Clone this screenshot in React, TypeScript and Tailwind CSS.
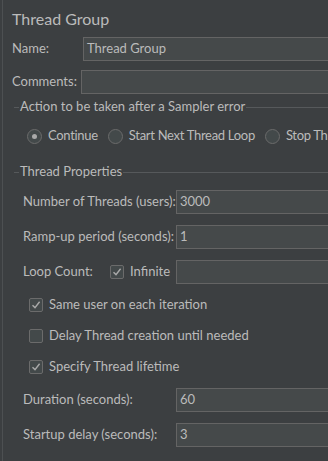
const font = { fontFamily: 'Lato, "Noto Sans", sans-serif' };

function TextField({ value, className }: { value?: string; className: string }) {
  return (
    <div className={`h-[24px] border border-[#646464] bg-[#45494a] flex items-center pl-[3px] text-[13px] text-[#bbbbbb] ${className}`}>
      {value}
    </div>
  );
}

function SectionTitle({ title }: { title: string }) {
  return (
    <div className="h-[26px] flex items-center">
      <div className="w-[5px] h-px bg-[#56595b] ml-[11px] shrink-0" />
      <span className="px-[1px] text-[13px] text-[#bbbbbb] whitespace-nowrap">{title}</span>
      <div className="flex-1 h-px bg-[#56595b]" />
    </div>
  );
}

function Radio({ label, checked }: { label: string; checked?: boolean }) {
  return (
    <div className="flex items-center gap-[6px] shrink-0">
      <div className="w-[15px] h-[15px] rounded-full border border-[#6b6b6b] bg-[#43494a] flex items-center justify-center shrink-0">
        {checked && <div className="w-[5px] h-[5px] rounded-full bg-[#a9a9a9]" />}
      </div>
      <span className="text-[13px] tracking-[-0.3px] text-[#bbbbbb] whitespace-nowrap">{label}</span>
    </div>
  );
}

function Check({ checked }: { checked?: boolean }) {
  return (
    <div className="w-[14px] h-[14px] rounded-[2px] border border-[#6b6b6b] bg-[#43494a] flex items-center justify-center shrink-0">
      {checked && (
        <svg width="10" height="10" viewBox="0 0 10 10">
          <path d="M1.5 5.2 L4 7.6 L8.6 1.8" fill="none" stroke="#a9a9a9" strokeWidth="1.4" />
        </svg>
      )}
    </div>
  );
}

function CheckRow({ label, checked, className }: { label: string; checked?: boolean; className: string }) {
  return (
    <div className={`h-[24px] flex items-center gap-[6px] pl-[26px] ${className}`}>
      <Check checked={checked} />
      <span className="text-[13px] text-[#bbbbbb] whitespace-nowrap">{label}</span>
    </div>
  );
}

function FieldRow({ label, value, className }: { label: string; value: string; className: string }) {
  return (
    <div className={`h-[24px] flex items-center ${className}`}>
      <span className="w-[173px] shrink-0 pl-[20px] text-[13px] text-[#bbbbbb] whitespace-nowrap">{label}</span>
      <TextField value={value} className="flex-1 -mr-[4px]" />
    </div>
  );
}

export default function App() {
  return (
    <div className="w-[328px] h-[461px] bg-[#3c3f41] overflow-hidden flex" style={font}>
      <div className="w-[2px] shrink-0" />
      <div className="w-px shrink-0 bg-[#4d5052]" />
      <div className="flex-1 flex flex-col pt-[6px] overflow-hidden">
        <div className="h-[26px] pl-[9px] text-[16px] leading-[26px] text-[#bbbbbb]">Thread Group</div>

        <div className="h-[24px] mt-[5px] flex items-center">
          <span className="w-[80px] shrink-0 pl-[9px] text-[13px] text-[#bbbbbb]">Name:</span>
          <TextField value="Thread Group" className="flex-1 -mr-[4px]" />
        </div>
        <div className="h-[24px] mt-[9px] flex items-center">
          <span className="w-[78px] shrink-0 pl-[9px] text-[13px] text-[#bbbbbb]">Comments:</span>
          <TextField className="flex-1 -mr-[4px]" />
        </div>

        <SectionTitle title="Action to be taken after a Sampler error" />
        <div className="h-[32px] flex items-center gap-[10px] pl-[24px]">
          <Radio label="Continue" checked />
          <Radio label="Start Next Thread Loop" />
          <Radio label="Stop Thread" />
        </div>

        <div className="mt-[7px]">
          <SectionTitle title="Thread Properties" />
        </div>
        <FieldRow label="Number of Threads (users):" value="3000" className="mt-[5px]" />
        <FieldRow label="Ramp-up period (seconds):" value="1" className="mt-[11px]" />
        <div className="h-[24px] mt-[11px] flex items-center">
          <span className="w-[107px] shrink-0 pl-[20px] text-[13px] text-[#bbbbbb]">Loop Count:</span>
          <Check checked />
          <span className="w-[52px] shrink-0 pl-[6px] text-[13px] text-[#bbbbbb]">Infinite</span>
          <TextField className="flex-1 -mr-[4px]" />
        </div>

        <CheckRow label="Same user on each iteration" checked className="mt-[9px]" />
        <CheckRow label="Delay Thread creation until needed" className="mt-[7px]" />
        <CheckRow label="Specify Thread lifetime" checked className="mt-[7px]" />

        <FieldRow label="Duration (seconds):" value="60" className="mt-[9px]" />
        <FieldRow label="Startup delay (seconds):" value="3" className="mt-[11px]" />
      </div>
    </div>
  );
}
